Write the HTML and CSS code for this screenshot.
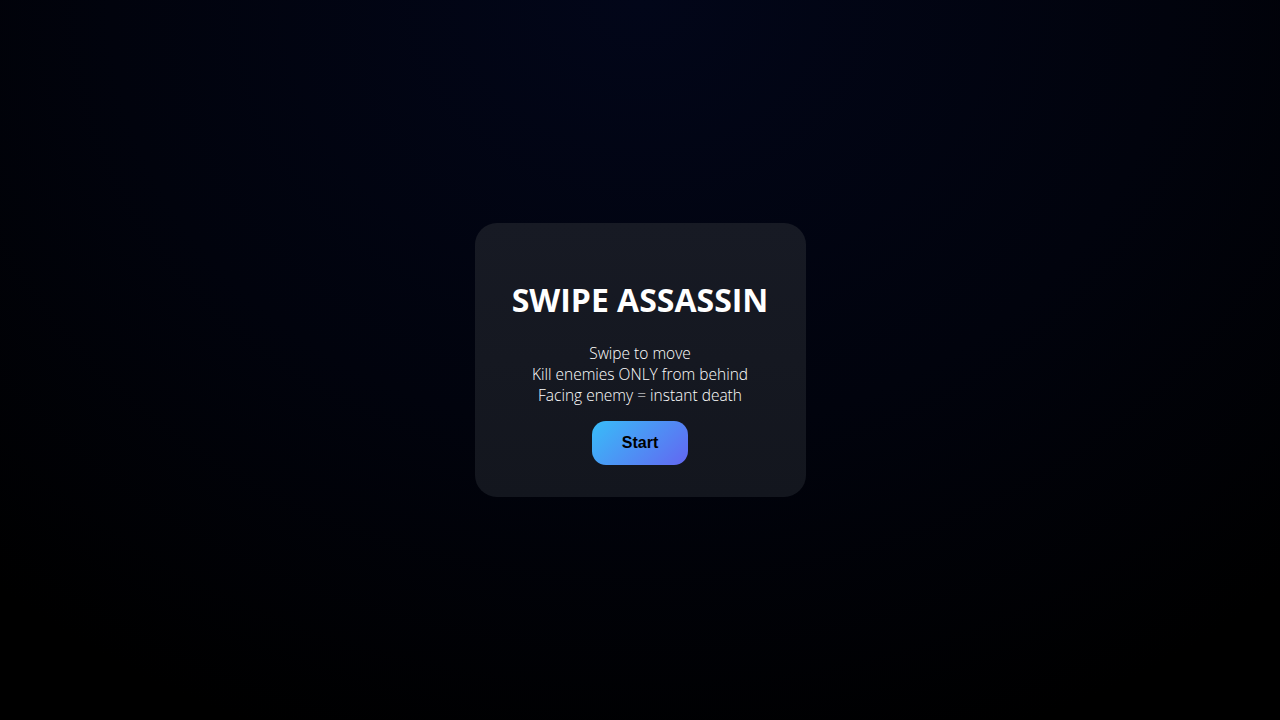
FILE: index.html
```html
<!DOCTYPE html>
<html lang="en">
<head>
    <meta charset="UTF-8">
    <meta name="viewport" content="width=device-width, initial-scale=1.0">
    <title>Swipe Assassin</title>
    <link rel="stylesheet" href="styles.css">
</head>
<body>
    <div class="overlay">
        <div class="panel">
            <h1>SWIPE ASSASSIN</h1>
            <p class="rules">
                Swipe to move<br>
                Kill enemies ONLY from behind<br>
                Facing enemy = instant death
            </p>
            <button class="start-btn" id="startBtn">Start</button>
        </div>
    </div>
</body>
</html>
```

FILE: styles.css
```css
html, body {
    margin: 0;
    padding: 0;
    height: 100%;
}

body {
    font-family: "Open Sans", "Noto Sans", sans-serif;
    background: radial-gradient(ellipse 75% 110% at 50% 0%, #020619 0%, #01030d 55%, #000 100%);
    color: #fff;
    overflow: hidden;
}

.overlay {
    height: 100vh;
    display: flex;
    align-items: center;
    justify-content: center;
}

.panel {
    width: 331px;
    box-sizing: border-box;
    padding: 55px 20px 32px;
    border-radius: 22px;
    background: linear-gradient(180deg, #171a24, #13161e);
    text-align: center;
}

h1 {
    margin: 0 0 22px;
    font-size: 32px;
    font-weight: 700;
    letter-spacing: 0;
}

.rules {
    margin: 0 0 15px;
    font-size: 15.5px;
    font-weight: 300;
    line-height: 21px;
    color: #fff;
}

.start-btn {
    width: 96px;
    height: 44px;
    border: none;
    border-radius: 14px;
    background: linear-gradient(135deg, #38bdf8, #6366f1);
    color: #000;
    font-family: "Liberation Sans", Arial, sans-serif;
    font-size: 16px;
    font-weight: 700;
    cursor: pointer;
}
```
